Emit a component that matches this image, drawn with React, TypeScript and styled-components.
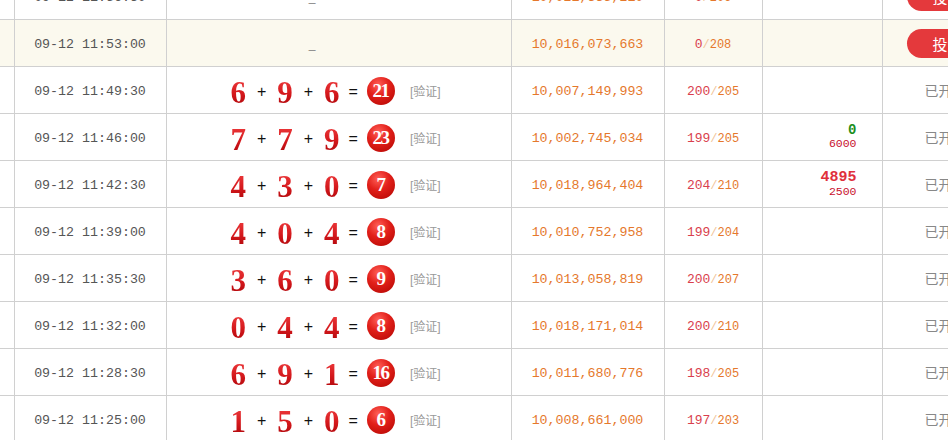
import styled, { createGlobalStyle } from 'styled-components'

const GlobalStyle = createGlobalStyle`
  html, body {
    margin: 0;
    padding: 0;
    background: #fff;
    overflow: hidden;
  }
  body {
    font-family: "Liberation Sans", "Noto Sans CJK SC", sans-serif;
  }
`

type Draw = {
  time: string
  nums?: [number, number, number]
  amount: string
  win: number
  total: number
  prize?: { top: string; bottom: string; green?: boolean }
  open: boolean
  highlight?: boolean
}

const rows: Draw[] = [
  { time: '09-12 11:56:30', amount: '10,021,335,210', win: 0, total: 206, open: false },
  { time: '09-12 11:53:00', amount: '10,016,073,663', win: 0, total: 208, open: false, highlight: true },
  { time: '09-12 11:49:30', nums: [6, 9, 6], amount: '10,007,149,993', win: 200, total: 205, open: true },
  {
    time: '09-12 11:46:00',
    nums: [7, 7, 9],
    amount: '10,002,745,034',
    win: 199,
    total: 205,
    prize: { top: '0', bottom: '6000', green: true },
    open: true,
  },
  {
    time: '09-12 11:42:30',
    nums: [4, 3, 0],
    amount: '10,018,964,404',
    win: 204,
    total: 210,
    prize: { top: '4895', bottom: '2500' },
    open: true,
  },
  { time: '09-12 11:39:00', nums: [4, 0, 4], amount: '10,010,752,958', win: 199, total: 204, open: true },
  { time: '09-12 11:35:30', nums: [3, 6, 0], amount: '10,013,058,819', win: 200, total: 207, open: true },
  { time: '09-12 11:32:00', nums: [0, 4, 4], amount: '10,018,171,014', win: 200, total: 210, open: true },
  { time: '09-12 11:28:30', nums: [6, 9, 1], amount: '10,011,680,776', win: 198, total: 205, open: true },
  { time: '09-12 11:25:00', nums: [1, 5, 0], amount: '10,008,661,000', win: 197, total: 203, open: true },
]

// column edges in the listing: 0 | 14 | 166 | 511 | 664 | 762 | 882 | ...
const widths = [14, 152, 345, 153, 98, 120, 130]

const Table = styled.table`
  border-collapse: collapse;
  table-layout: fixed;
  width: ${widths.reduce((a, b) => a + b, 0)}px;
  margin-top: -28px;
`

const Row = styled.tr<{ $highlight?: boolean }>`
  height: 47px;
  background: ${(p) => (p.$highlight ? '#fbf9ee' : '#fff')};
`

const Col = styled.col<{ $w: number }>`
  width: ${(p) => p.$w}px;
`

const Cell = styled.td<{ $align?: 'left' | 'center' }>`
  height: 46px;
  padding: 0;
  border: 1px solid #d0d0d0;
  text-align: ${(p) => p.$align ?? 'center'};
  vertical-align: middle;
  white-space: nowrap;
  overflow: hidden;
  &:first-child {
    border-left: none;
  }
`

const Mono = styled.span`
  font-family: "Liberation Mono", "Noto Sans CJK SC", monospace;
`

const Time = styled(Mono)`
  font-size: 13.3px;
  color: #555;
`

const Amount = styled(Mono)`
  font-size: 13.3px;
  color: #e5782c;
`

const Dash = styled.span`
  display: inline-block;
  margin-right: 53px;
  font-size: 12px;
  color: #888;
`

const Formula = styled.div`
  display: inline-flex;
  align-items: center;
  gap: 11px;
  margin-left: -6px;
`

const Digit = styled.span`
  font-family: "Liberation Serif", "Times New Roman", serif;
  font-weight: bold;
  font-size: 31px;
  line-height: 1;
  background: linear-gradient(#f03e40, #d4181c 55%, #aa0408);
  -webkit-background-clip: text;
  background-clip: text;
  color: transparent;
  margin-top: 4px;
`

const Op = styled.span<{ $tight?: boolean }>`
  font-family: "Liberation Sans", sans-serif;
  font-size: 16px;
  color: #111;
  margin-top: 3px;
  margin-left: ${(p) => (p.$tight ? -2 : 0)}px;
`

const Ball = styled.span`
  display: inline-flex;
  align-items: center;
  justify-content: center;
  width: 28px;
  height: 28px;
  margin-left: -2px;
  border-radius: 50%;
  background: radial-gradient(circle at 40% 28%, #ff6058 0%, #e2201a 42%, #b00400 100%);
  color: #fff;
  font-family: "Liberation Serif", serif;
  font-weight: bold;
  font-size: 19px;
  letter-spacing: -1.5px;
  text-indent: -1px;
  margin-top: 2px;
`

const Verify = styled.span`
  font-size: 12px;
  color: #999;
  margin-left: 4px;
  font-family: "Liberation Sans", "Noto Sans CJK SC", sans-serif;
`

const Count = styled(Mono)`
  font-size: 12px;
  color: #e5782c;
`

const Won = styled.span`
  font-size: 13px;
  color: #d93f4d;
`

const Slash = styled.span`
  color: #f1c59a;
`

const Prize = styled.div`
  display: flex;
  flex-direction: column;
  align-items: flex-end;
  padding-right: 25px;
  font-family: "Liberation Mono", monospace;
  line-height: 13px;
`

const PrizeTop = styled.span<{ $green?: boolean }>`
  font-size: ${(p) => (p.$green ? 14 : 15)}px;
  line-height: ${(p) => (p.$green ? 13 : 15)}px;
  font-weight: bold;
  color: ${(p) => (p.$green ? '#1d8f1d' : '#e0303c')};
`

const PrizeBottom = styled.span`
  font-size: 11.5px;
  color: #c8102e;
`

const Status = styled.span`
  display: inline-block;
  padding-left: 42px;
  font-size: 14px;
  color: #888;
`

const BetButton = styled.span`
  display: inline-flex;
  align-items: center;
  justify-content: center;
  width: 82px;
  height: 29px;
  margin-left: 24px;
  border-radius: 15px;
  background: #e4393c;
  color: #fff;
  font-size: 15px;
`

export default function App() {
  return (
    <>
      <GlobalStyle />
      <Table>
        <colgroup>
          {widths.map((w, i) => (
            <Col key={i} $w={w} />
          ))}
        </colgroup>
        <tbody>
          {rows.map((r) => (
            <Row key={r.time} $highlight={r.highlight}>
              <Cell />
              <Cell>
                <Time>{r.time}</Time>
              </Cell>
              <Cell>
                {r.nums ? (
                  <Formula>
                    <Digit>{r.nums[0]}</Digit>
                    <Op>+</Op>
                    <Digit>{r.nums[1]}</Digit>
                    <Op>+</Op>
                    <Digit>{r.nums[2]}</Digit>
                    <Op $tight>=</Op>
                    <Ball>{r.nums[0] + r.nums[1] + r.nums[2]}</Ball>
                    <Verify>[验证]</Verify>
                  </Formula>
                ) : (
                  <Dash>_</Dash>
                )}
              </Cell>
              <Cell>
                <Amount>{r.amount}</Amount>
              </Cell>
              <Cell>
                <Count>
                  <Won>{r.win}</Won>
                  <Slash>/</Slash>
                  {r.total}
                </Count>
              </Cell>
              <Cell>
                {r.prize && (
                  <Prize>
                    <PrizeTop $green={r.prize.green}>{r.prize.top}</PrizeTop>
                    <PrizeBottom>{r.prize.bottom}</PrizeBottom>
                  </Prize>
                )}
              </Cell>
              <Cell $align="left">
                {r.open ? <Status>已开</Status> : <BetButton>投注</BetButton>}
              </Cell>
            </Row>
          ))}
        </tbody>
      </Table>
    </>
  )
}
